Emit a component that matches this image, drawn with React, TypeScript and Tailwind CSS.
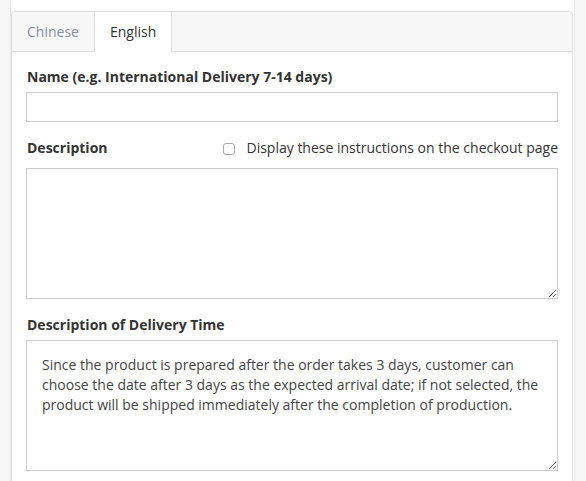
import { useState } from "react";

const deliveryText =
  "Since the product is prepared after the order takes 3 days, customer can choose the date after 3 days as the expected arrival date; if not selected, the product will be shipped immediately after the completion of production.";

export default function App() {
  const [tab, setTab] = useState("en");
  const [show, setShow] = useState(false);

  return (
    <div className="flex h-[481px] overflow-hidden bg-[#f6f6f6] font-['Open_Sans',sans-serif] text-[14px] leading-[20px] text-[#333]">
      <div className="ml-[10px] w-[565px] border-x border-[#e6e6e6] bg-white pt-[11px]">
        <div className="mr-[1px] rounded-t-[4px] border border-[#dddddd]">
          {/* tabs */}
          <div className="flex h-[40px] rounded-t-[4px] border-b border-[#dddddd] bg-[#f7f7f7]">
            <button
              onClick={() => setTab("zh")}
              className={`flex h-[40px] items-center border-r border-[#dddddd] px-[15px] ${
                tab === "zh" ? "bg-white text-[#333]" : "text-[#8a8f99]"
              }`}
            >
              Chinese
            </button>
            <button
              onClick={() => setTab("en")}
              className={`flex h-[40px] items-center border-r border-[#dddddd] px-[15px] ${
                tab === "en" ? "bg-white text-[#333]" : "text-[#8a8f99]"
              }`}
            >
              English
            </button>
          </div>

          <div className="px-[14px] pt-[15px] pb-[20px]">
            <label className="mb-[5px] block pl-[1px] font-bold">Name (e.g. International Delivery 7-14 days)</label>
            <input className="block h-[30px] w-full border border-[#cccccc] px-[12px] outline-none" />

            <div className="mt-[16px] mb-[10px] flex items-center justify-between">
              <label className="pl-[1px] font-bold">Description</label>
              <label className="flex items-center gap-[11px]">
                <input
                  type="checkbox"
                  checked={show}
                  onChange={(e) => setShow(e.target.checked)}
                  className="mt-[1px] h-[12px] w-[12px] appearance-none rounded-[3px] border border-[#a9a9a9] bg-white checked:bg-[#4a90e2]"
                />
                <span>Display these instructions on the checkout page</span>
              </label>
            </div>
            <textarea className="block h-[131px] w-full border border-[#cccccc] px-[15px] pt-[14px] text-[#444] outline-none" />

            <label className="mt-[16px] mb-[5px] block pl-[1px] font-bold">Description of Delivery Time</label>
            <textarea
              defaultValue={deliveryText}
              className="block h-[131px] w-full border border-[#cccccc] px-[15px] pt-[14px] text-[#444] outline-none"
            />
          </div>
        </div>
      </div>
    </div>
  );
}
